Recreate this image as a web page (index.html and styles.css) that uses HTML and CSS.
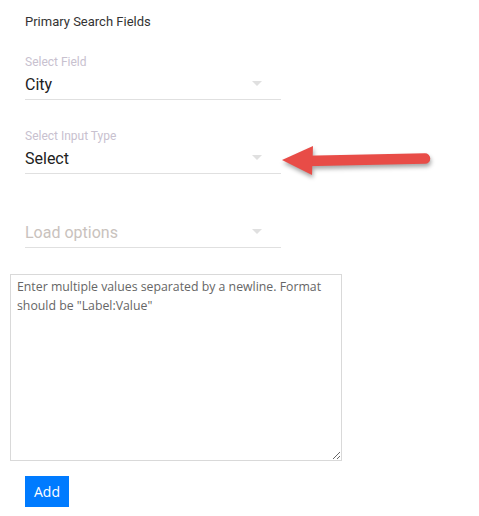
FILE: index.html
```html
<!DOCTYPE html>
<html>
<head>
<meta charset="utf-8">
<link rel="stylesheet" href="styles.css">
</head>
<body>
<div class="page">
  <div class="title">Primary Search Fields</div>
  <div class="fields">
    <div class="field">
      <div class="label">Select Field</div>
      <div class="value">City<span class="caret"></span></div>
    </div>
    <div class="field">
      <div class="label">Select Input Type</div>
      <div class="value">Select<span class="caret"></span></div>
    </div>
    <div class="field">
      <div class="label"></div>
      <div class="value placeholder">Load options<span class="caret"></span></div>
    </div>
  </div>
  <textarea class="values" placeholder="Enter multiple values separated by a newline. Format should be &quot;Label:Value&quot;"></textarea>
  <button class="add">Add</button>
  <svg class="arrow" width="160" height="50" viewBox="275 138 160 50">
    <line x1="305" y1="161" x2="425" y2="158.5" stroke="#e84c47" stroke-width="10.5" stroke-linecap="round"/>
    <polygon points="282,160 313,146 312,175" fill="#e84c47"/>
  </svg>
</div>
</body>
</html>
```

FILE: styles.css
```css
html, body {
  margin: 0;
  padding: 0;
  background: #fff;
}
.page {
  position: relative;
  padding: 15px 0 0 10px;
  font-family: Roboto, "Noto Sans", sans-serif;
}
.title {
  padding-left: 15px;
  font-size: 13px;
  line-height: 14px;
  color: #333;
}
.fields {
  margin-top: 26px;
  padding-left: 15px;
  width: 256px;
  display: flex;
  flex-direction: column;
  gap: 29px;
}
.field {
  border-bottom: 1px solid #e0e0e0;
  padding-bottom: 4px;
}
.label {
  font-size: 12px;
  line-height: 14px;
  height: 14px;
  color: #c8c1cf;
}
.value {
  margin-top: 6px;
  font-size: 16px;
  line-height: 20px;
  color: #212121;
  display: flex;
  justify-content: space-between;
  align-items: flex-start;
}
.value.placeholder {
  color: #c9c2bd;
}
.caret {
  width: 0;
  height: 0;
  margin: 6px 19px 0 0;
  border-left: 5px solid transparent;
  border-right: 5px solid transparent;
  border-top: 5px solid #e0e0e0;
}
.values {
  display: block;
  margin-top: 26px;
  box-sizing: border-box;
  width: 332px;
  height: 187px;
  border: 1px solid #d9d9d9;
  padding: 3px 6px;
  font-family: "Open Sans", sans-serif;
  font-size: 12.3px;
  line-height: 18.5px;
  resize: vertical;
}
.values::placeholder {
  color: #666;
  opacity: 1;
}
.add {
  display: block;
  margin: 15px 0 0 15px;
  height: 31px;
  padding: 0 9px;
  border: none;
  border-radius: 0;
  background: #007bff;
  color: #fff;
  font-family: "Open Sans", sans-serif;
  font-size: 14px;
}
.arrow {
  position: absolute;
  left: 275px;
  top: 138px;
  filter: drop-shadow(1px 3px 2px rgba(0,0,0,0.35));
}
```
